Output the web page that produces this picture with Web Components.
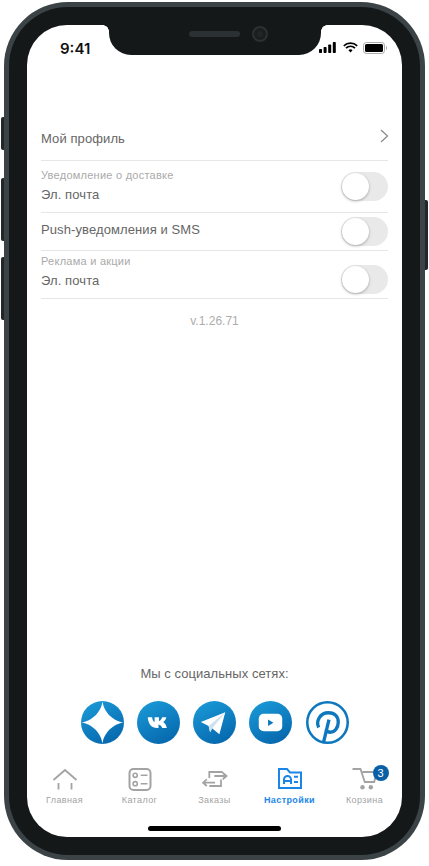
<!DOCTYPE html>
<html lang="ru">
<head>
<meta charset="utf-8">
<title>Настройки</title>
<style>
  html, body { margin: 0; background: #fff; }
  body { font-family: "Liberation Sans", Arial, sans-serif; }
</style>
</head>
<body>
<phone-frame>
  <status-bar></status-bar>
  <settings-list>
    <setting-row kind="link" label="Мой профиль" height="92"></setting-row>
    <setting-row kind="toggle" caption="Уведомление о доставке" label="Эл. почта" height="52" lift="2"></setting-row>
    <setting-row kind="toggle" label="Push-уведомления и SMS" height="38" lift="4"></setting-row>
    <setting-row kind="toggle" caption="Реклама и акции" label="Эл. почта" height="48" lift="6" drop="10"></setting-row>
  </settings-list>
  <social-links></social-links>
  <tab-bar></tab-bar>
</phone-frame>

<script>
// outer shell of the phone, whatever is slotted goes on the white screen
class PhoneFrame extends HTMLElement {
  constructor() {
    super();
    const root = this.attachShadow({ mode: "open" });
    root.innerHTML = `
      <style>
        :host { display: block; padding: 2px 4px 0; width: 421px; height: 858px; position: relative; }
        .body {
          box-sizing: border-box; width: 421px; height: 858px; padding: 5px;
          background: #3b4347; border-radius: 64px;
        }
        .bezel {
          box-sizing: border-box; width: 411px; height: 848px; padding: 18px;
          background: #141819; border-radius: 59px;
        }
        .screen {
          position: relative; width: 375px; height: 812px; overflow: hidden;
          background: #fff; border-radius: 40px;
          display: flex; flex-direction: column;
        }
        .notch {
          position: absolute; left: 82px; top: 0; width: 212px; height: 30px;
          background: #141819; border-radius: 0 0 22px 22px;
        }
        .notch::before, .notch::after {
          content: ""; position: absolute; top: 0; width: 6px; height: 6px;
          background: radial-gradient(circle at 0 100%, transparent 5.5px, #141819 6px);
        }
        .notch::before { left: -6px; }
        .notch::after { right: -6px; transform: scaleX(-1); }
        .speaker {
          position: absolute; left: 80px; top: 6px; width: 51px; height: 6px;
          background: #2b3032; border-radius: 3px;
        }
        .camera {
          position: absolute; left: 143px; top: 1px; width: 16px; height: 16px;
          box-sizing: border-box; background: #1a1e1f; border: 2px solid #2b3032; border-radius: 50%;
        }
        .camera::after {
          content: ""; position: absolute; left: 3px; top: 3px; width: 6px; height: 6px;
          border-radius: 50%; background: #202527;
        }
        .btn { position: absolute; width: 3px; background: #222829; }
        .left { left: 1px; border-radius: 2px 0 0 2px; }
        .right { left: 425px; top: 200px; height: 70px; border-radius: 0 2px 2px 0; }
      </style>
      <span class="btn left" style="top:117px;height:33px"></span>
      <span class="btn left" style="top:178px;height:63px"></span>
      <span class="btn left" style="top:257px;height:63px"></span>
      <span class="btn right"></span>
      <div class="body"><div class="bezel"><div class="screen">
        <slot></slot>
        <div class="notch"><span class="speaker"></span><span class="camera"></span></div>
      </div></div></div>`;
  }
}
customElements.define("phone-frame", PhoneFrame);

class StatusBar extends HTMLElement {
  constructor() {
    super();
    const root = this.attachShadow({ mode: "open" });
    root.innerHTML = `
      <style>
        :host {
          display: flex; align-items: center; justify-content: space-between; flex: none;
          box-sizing: border-box; height: 44px; padding: 2px 15px 0 33px;
          font: 600 15px Inter, "Liberation Sans", sans-serif; color: #111;
        }
        .icons { display: flex; align-items: center; margin-top: -1px; }
        svg { display: block; }
        .signal { margin-right: 7px; }
        .wifi { margin-right: 5px; }
      </style>
      <span>9:41</span>
      <span class="icons">
        <svg class="signal" width="17" height="11" viewBox="0 0 17 11" fill="#000">
          <rect x="0" y="7" width="3" height="4" rx=".8"/><rect x="4.6" y="5" width="3" height="6" rx=".8"/>
          <rect x="9.2" y="2.5" width="3" height="8.5" rx=".8"/><rect x="13.8" y="0" width="3" height="11" rx=".8"/>
        </svg>
        <svg class="wifi" width="15" height="11" viewBox="0 0 15 11" fill="none" stroke="#000" stroke-width="1.7">
          <path d="M.8 3.8a9.6 9.6 0 0 1 13.4 0M3 6.1a6.4 6.4 0 0 1 9 0"/>
          <path d="M5.4 8.3 7.5 10.6 9.6 8.3a3 3 0 0 0-4.2 0z" fill="#000" stroke="none"/>
        </svg>
        <svg width="24" height="12" viewBox="0 0 24 12">
          <rect x=".5" y=".5" width="21" height="11" rx="2.8" fill="none" stroke="#aaa"/>
          <rect x="2" y="2" width="18" height="8" rx="1.5" fill="#000"/>
          <path d="M23 4v4a2 2 0 0 0 1-2 2 2 0 0 0-1-2z" fill="#aaa"/>
        </svg>
      </span>`;
  }
}
customElements.define("status-bar", StatusBar);

class SettingsList extends HTMLElement {
  constructor() {
    super();
    const root = this.attachShadow({ mode: "open" });
    root.innerHTML = `
      <style>
        :host { display: flex; flex-direction: column; flex: 1; padding: 0 14px; }
        .version { margin-top: 14px; text-align: center; font-size: 12px; line-height: 16px; color: #adadad; }
      </style>
      <slot></slot>
      <div class="version">v.1.26.71</div>`;
  }
}
customElements.define("settings-list", SettingsList);

// one row of the list: label with optional small caption, chevron or switch on the right
// lift / drop nudge the text and the switch off the row's centre line
class SettingRow extends HTMLElement {
  connectedCallback() {
    const root = this.attachShadow({ mode: "open" });
    const caption = this.getAttribute("caption");
    const isLink = this.getAttribute("kind") === "link";
    const lift = this.getAttribute("lift") || 0;
    const drop = this.getAttribute("drop") || 0;
    root.innerHTML = `
      <style>
        :host {
          display: flex; align-items: ${isLink ? "flex-end" : "center"}; justify-content: space-between;
          box-sizing: border-box; height: ${this.getAttribute("height")}px;
          border-bottom: 1px solid #e6e6e6; color: #666;
          ${isLink ? "padding-bottom: 13px;" : ""}
        }
        .text { margin-bottom: ${lift}px; }
        .label { font-size: 13px; line-height: 16px; letter-spacing: .1px; }
        .caption { font-size: 11px; line-height: 13px; letter-spacing: .25px; color: #aaa; margin-bottom: 5px; }
        .chevron { display: block; margin-right: -1px; margin-bottom: 4px; }
        .switch {
          position: relative; width: 47px; height: 29px; border-radius: 15px; background: #e9e9e9; flex: none;
          margin-top: ${drop}px;
        }
        .switch::after {
          content: ""; position: absolute; left: 1px; top: 1px; width: 27px; height: 27px; border-radius: 50%;
          background: #fff; box-shadow: 0 1px 3px rgba(0,0,0,.3);
        }
      </style>
      <div class="text">
        ${caption ? `<div class="caption">${caption}</div>` : ""}
        <div class="label">${this.getAttribute("label")}</div>
      </div>
      ${isLink
        ? `<svg class="chevron" width="9" height="14" viewBox="0 0 9 14" fill="none" stroke="#8c8c8c" stroke-width="1.3"><path d="M1 1l6.5 6L1 13"/></svg>`
        : `<span class="switch"></span>`}`;
  }
}
customElements.define("setting-row", SettingRow);

// round blue badge shared by the social icons
const socialGradient = `<defs><linearGradient id="g" x1=".25" y1="0" x2=".75" y2="1"><stop offset="0" stop-color="#1a98d6"/><stop offset="1" stop-color="#0566ac"/></linearGradient></defs><circle cx="22" cy="22" r="22" fill="url(#g)"/>`;

class SocialLinks extends HTMLElement {
  constructor() {
    super();
    const root = this.attachShadow({ mode: "open" });
    root.innerHTML = `
      <style>
        :host { display: block; flex: none; text-align: center; }
        .title { font-size: 13px; line-height: 16px; letter-spacing: .05px; color: #666; }
        .icons { display: flex; justify-content: center; gap: 13.25px; margin-top: 19px; }
        svg { display: block; width: 43px; height: 43px; }
      </style>
      <div class="title">Мы с социальных сетях:</div>
      <div class="icons">
        <svg viewBox="0 0 44 44">
          ${socialGradient}
          <path d="M22 0C23 11 33 21 44 22 33 23 23 33 22 44 21 33 11 23 0 22 11 21 21 11 22 0z" fill="#fff"/>
        </svg>
        <svg viewBox="0 0 44 44">
          ${socialGradient}
          <path d="M11 16.500h4.500c.3 3 1.300 4.500 2.500 5v-5h4.500v4c1.300-.4 2.600-2 3.200-4h4.300c-.5 2.500-2 4-3.200 5 1.300.7 3 2.500 3.700 6h-4.700c-.5-1.800-2-3.200-3.800-3.500v3.500h-1.500c-5.500 0-9-4-9.500-11z" fill="#fff"/>
        </svg>
        <svg viewBox="0 0 44 44">
          ${socialGradient}
          <path d="M8 21.500 33 11.500 27 34 19.500 28 17.500 32 16 25.500z" fill="#fff"/>
          <path d="M16 25.500 33 11.500 20 27.500 17.500 32z" fill="#cfe0ee"/>
        </svg>
        <svg viewBox="0 0 44 44">
          ${socialGradient}
          <rect x="10" y="13" width="24" height="18" rx="5" fill="#fff"/>
          <path d="M19.500 19v6.500l5.500-3.200z" fill="#0d78bd"/>
        </svg>
        <svg viewBox="0 0 44 44" fill="none" stroke="#0d78bd">
          <circle cx="22" cy="22" r="20.700" stroke-width="2.600"/>
          <path d="M13 27c-3-6 1-15 10-15 6.500 0 10 4 10 9.500 0 6-3.500 10.500-8 10.500-2.500 0-4-1-4.700-3M23.500 19l-5.500 23" stroke-width="3.400"/>
        </svg>
      </div>`;
  }
}
customElements.define("social-links", SocialLinks);

class TabItem extends HTMLElement {
  connectedCallback() {
    const root = this.attachShadow({ mode: "open" });
    const active = this.hasAttribute("active");
    root.innerHTML = `
      <style>
        :host {
          display: flex; flex-direction: column; align-items: center; width: 75px;
          font-size: 9px; line-height: 12px; letter-spacing: .4px;
          font-weight: ${active ? 700 : 400};
          color: ${active ? "#1c86e8" : "#a3a3a3"};
        }
        .icon { position: relative; height: 26px; margin-bottom: 2px; }
      </style>
      <div class="icon"><slot></slot></div>
      <span>${this.getAttribute("label")}</span>`;
  }
}
customElements.define("tab-item", TabItem);

class TabBar extends HTMLElement {
  constructor() {
    super();
    const root = this.attachShadow({ mode: "open" });
    root.innerHTML = `
      <style>
        :host { display: block; flex: none; box-sizing: border-box; margin-top: 21px; padding-top: 1px; height: 72px; }
        .tabs { display: flex; }
        svg { display: block; }
        .badge {
          position: absolute; left: 21px; top: -1px; width: 16px; height: 16px; border-radius: 50%;
          background: #0b5fa5; color: #fff; font-size: 11px; line-height: 16px; text-align: center; letter-spacing: 0;
        }
        .home { width: 133px; height: 5px; border-radius: 3px; background: #000; margin: 20px auto 0; }
      </style>
      <div class="tabs">
        <tab-item label="Главная">
          <svg width="26" height="26" viewBox="0 0 26 26" fill="none" stroke="#a3a3a3" stroke-width="1.8"><path d="M1.500 14 13 4 24.500 14M6.500 17v6.500M19.500 17v6.500"/></svg>
        </tab-item>
        <tab-item label="Каталог">
          <svg width="26" height="26" viewBox="0 0 26 26" fill="none" stroke="#a3a3a3" stroke-width="2"><rect x="2.500" y="3" width="21" height="21" rx="4"/><g stroke-width="1.600"><circle cx="8.200" cy="9.300" r="2.100"/><circle cx="8.200" cy="17.700" r="2.100"/><path d="M13.700 9.300h6.800M13.700 17.700h6.800"/></g></svg>
        </tab-item>
        <tab-item label="Заказы">
          <svg width="26" height="26" viewBox="0 0 26 26" fill="none" stroke="#a3a3a3" stroke-width="1.800"><path d="M7.300 12V6h13.400M12.300 10H24M20.700 6.700 24.500 10l-3.800 3.300M13 16.700H1.500M4.800 13.300 1 16.700 4.800 20M7.300 20H19v-6.500"/></svg>
        </tab-item>
        <tab-item label="Настройки" active>
          <svg width="26" height="26" viewBox="0 0 26 26" fill="none" stroke="#1c86e8" stroke-width="2"><path d="M2 3h8l3 3.500h11V22H2z"/><path d="M7 18v-4.500a3.500 3.500 0 0 1 7 0V18M7 15h7M17 10.700h4M17 16h4"/></svg>
        </tab-item>
        <tab-item label="Корзина">
          <svg width="26" height="26" viewBox="0 0 26 26" fill="none" stroke="#a3a3a3" stroke-width="1.800"><path d="M.5 3h8l4.300 13h9.400l2.300-9M10.500 6h13"/><circle cx="10.500" cy="21.300" r="2.200" fill="#a3a3a3" stroke="none"/><circle cx="18.800" cy="21.300" r="2.200" fill="#a3a3a3" stroke="none"/></svg>
          <span class="badge">3</span>
        </tab-item>
      </div>
      <div class="home"></div>`;
  }
}
customElements.define("tab-bar", TabBar);
</script>
</body>
</html>
